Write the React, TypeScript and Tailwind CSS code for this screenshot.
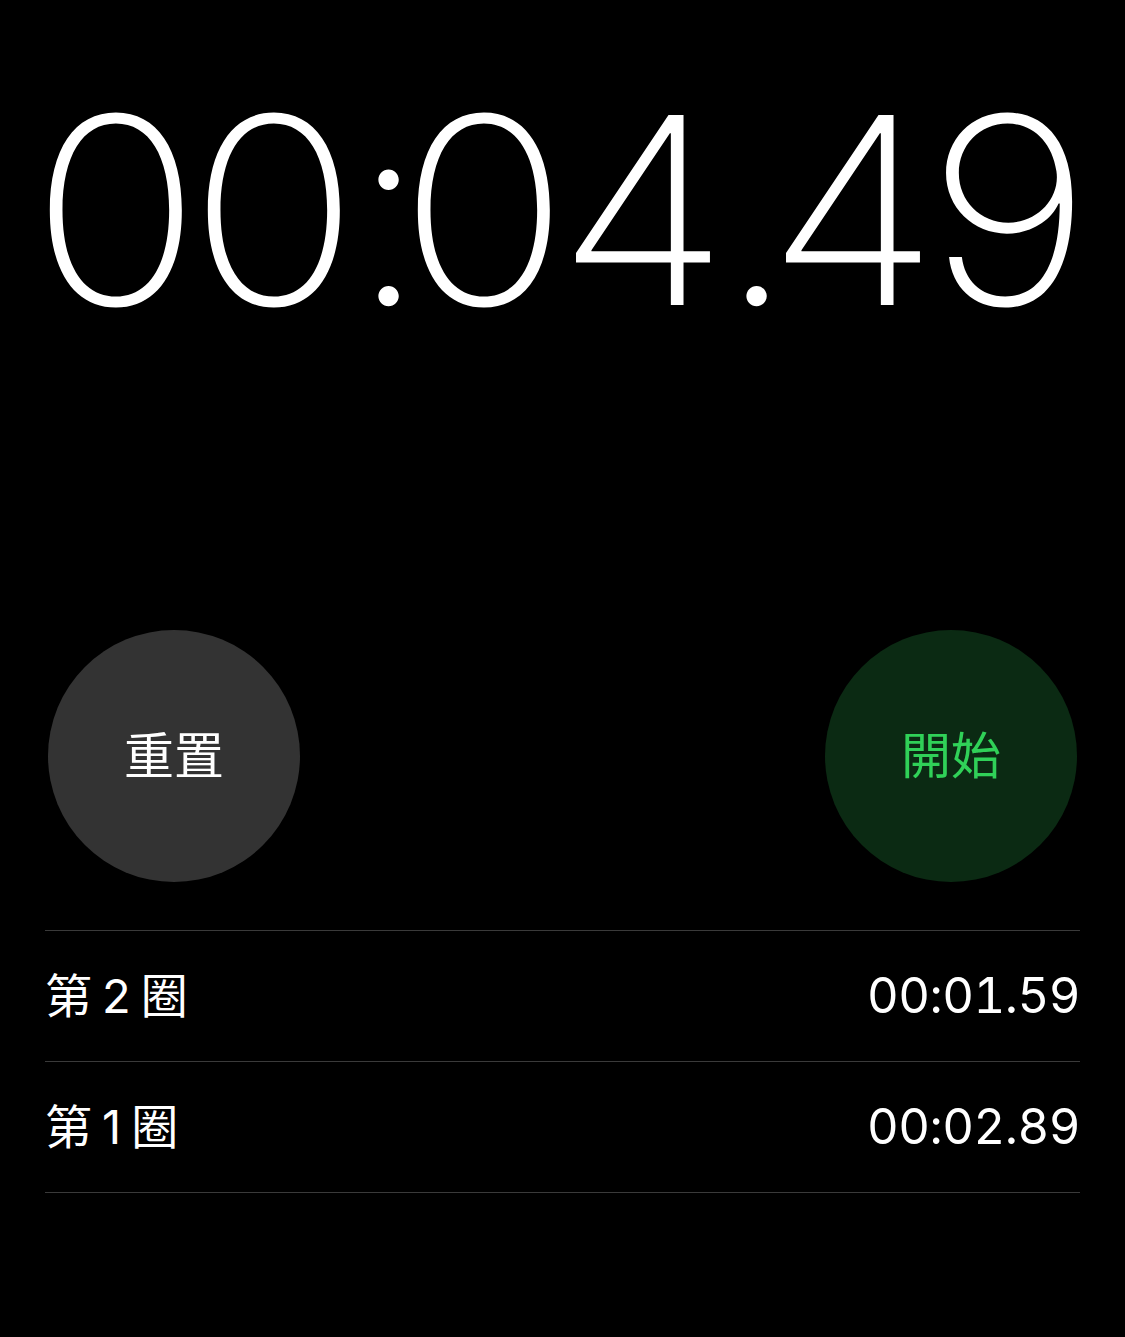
const laps = [
  { n: '2', time: '00:01.59' },
  { n: '1', time: '00:02.89' },
]

const clock = '00:04.49'

export default function App() {
  return (
    <div className="min-h-screen w-full bg-black text-white" style={{ fontFamily: 'Inter, "Noto Sans CJK TC", sans-serif' }}>
      <div className="flex justify-center pt-[80px] h-[630px]">
        <div className="flex text-[261px] leading-none font-[160]">
          {clock.split('').map((c, i) =>
            c === ':' || c === '.' ? (
              <span key={i} className="inline-block w-[52px] text-center">{c}</span>
            ) : (
              <span key={i} className="inline-block w-[158px] text-center">
                <span className="inline-block scale-x-[1.08]">{c}</span>
              </span>
            )
          )}
        </div>
      </div>
      <div className="flex justify-between px-[48px]">
        <button className="flex h-[252px] w-[252px] items-center justify-center rounded-full bg-[#333333] text-[50px] text-white">重置</button>
        <button className="flex h-[252px] w-[252px] items-center justify-center rounded-full bg-[#0b2a13] text-[50px] text-[#30d158]">開始</button>
      </div>
      <div className="mx-[45px] mt-[48px] border-t border-[#3a3a3a]">
        {laps.map((lap) => (
          <div key={lap.n} className="flex h-[131px] items-center justify-between border-b border-[#3a3a3a]">
            <span className="text-[47px]">
              第<span className="mx-[10px]">{lap.n}</span>圈
            </span>
            <span className="text-[49px] tracking-[-0.5px] tabular-nums">{lap.time}</span>
          </div>
        ))}
      </div>
    </div>
  )
}
